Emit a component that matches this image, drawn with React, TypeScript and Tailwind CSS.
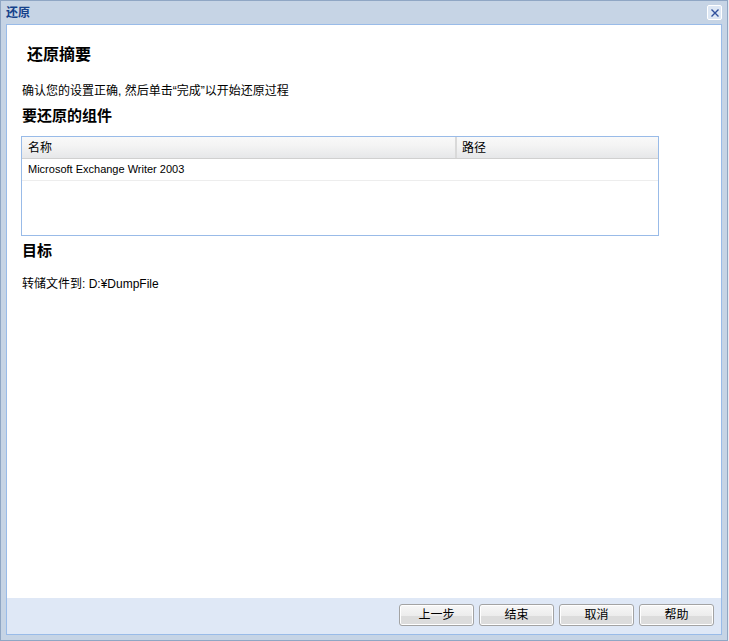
import React from "react";

const font = "font-['Liberation_Sans','Noto_Sans_CJK_SC',sans-serif]";

const Btn = ({ label }: { label: string }) => (
  <button className="relative h-[22px] w-[75px] overflow-hidden rounded-[3px] border border-[#a3a3a3] bg-[linear-gradient(#f7f7f7,#ececec_55%,#dcdcdc_56%,#dcdcdc)] text-[12px] leading-[20px] text-black shadow-[inset_0_0_0_1px_#ffffff]">
    {label}
  </button>
);

const App = () => {
  return (
    <div className={`flex h-[641px] w-[729px] bg-[#e9edf3] ${font}`}>
      <div className="flex h-[641px] w-[728px] flex-col border border-[#8fa6c4] bg-[#c6d4e5]">
        {/* Title bar */}
        <div className="flex h-[23px] items-center justify-between pl-[5px] pr-[5px]">
          <span className="text-[12px] font-bold leading-none text-[#15428b]">还原</span>
          <div className="flex h-[15px] w-[15px] items-center justify-center rounded-[2px] border border-white bg-[#dde7f4]">
            <svg width="10" height="10" viewBox="0 0 10 10">
              <path d="M1.5 1.5 L8.5 8.5 M8.5 1.5 L1.5 8.5" stroke="#2f4f9c" strokeWidth="1.4" />
            </svg>
          </div>
        </div>

        {/* Body */}
        <div className="mx-[5px] flex flex-1 flex-col border border-[#99bbe8]">
          <div className="flex flex-1 flex-col bg-white pl-[14px] pr-[62px]">
            <h1 className="ml-[6px] mt-[22px] text-[16px] font-bold leading-[16px] text-black">还原摘要</h1>
            <p className="ml-px mt-[22px] text-[12px] leading-[12px] text-black">
              确认您的设置正确, 然后单击“完成”以开始还原过程
            </p>
            <h2 className="ml-px mt-[11px] text-[15px] font-bold leading-[15px] text-black">要还原的组件</h2>

            {/* Components table */}
            <div className="mt-[13px] h-[100px] w-[638px] border border-[#99bbe8]">
              <div className="flex h-[22px] border-b border-[#d0d0d0] bg-[linear-gradient(#f9f9f9,#f4f4f4_40%,#e6e7e9)] text-[12px] text-black">
                <div className="flex w-[435px] items-center border-r-2 border-[#d9d9d9] pl-[6px]">名称</div>
                <div className="flex flex-1 items-center pl-[5px]">路径</div>
              </div>
              <div className="flex h-[22px] items-center border-b border-[#ededed] pl-[6px] text-[11px] text-black">
                Microsoft Exchange Writer 2003
              </div>
            </div>

            <h2 className="ml-px mt-[7px] text-[15px] font-bold leading-[15px] text-black">目标</h2>
            <p className="ml-px mt-[20px] text-[12px] leading-[12px] text-black">转储文件到: D:¥DumpFile</p>
          </div>

          {/* Footer buttons */}
          <div className="flex h-[36px] justify-end gap-[5px] bg-[#dfe8f6] pr-[7px] pt-[6px]">
            <Btn label="上一步" />
            <Btn label="结束" />
            <Btn label="取消" />
            <Btn label="帮助" />
          </div>
        </div>
        <div className="h-[5px]" />
      </div>
    </div>
  );
};

export default App;
